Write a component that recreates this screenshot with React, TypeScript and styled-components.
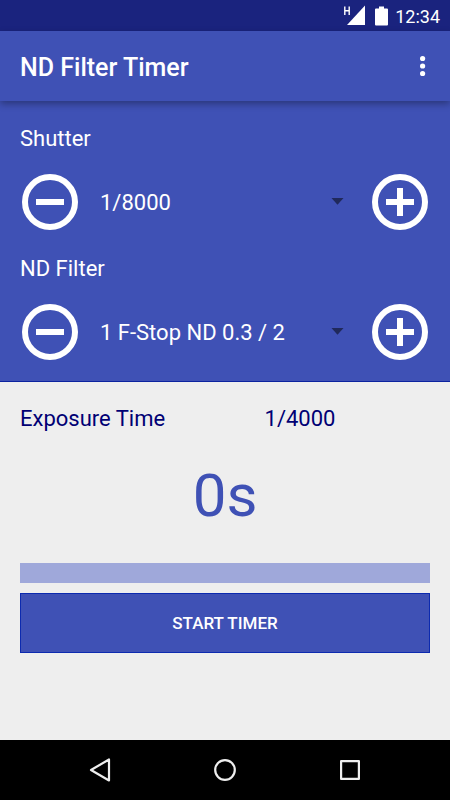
import React, { useState } from "react";
import styled, { createGlobalStyle } from "styled-components";

const GlobalStyle = createGlobalStyle`
  *, *::before, *::after { box-sizing: border-box; }
  body {
    margin: 0;
    font-family: Roboto, "Liberation Sans", sans-serif;
    font-size: 22px;
    line-height: 28px;
  }
  button, select { font: inherit; color: inherit; margin: 0; }
`;

const Screen = styled.div`
  min-height: 100vh;
  display: flex;
  flex-direction: column;
  background: #eeeeee;
`;

const StatusBar = styled.div`
  height: 31px;
  display: flex;
  align-items: center;
  justify-content: flex-end;
  gap: 7px;
  padding: 0 10px;
  background: #1a237e;
  color: #ffffff;
  font-size: 18px;
  line-height: 20px;
  svg { display: block; }
`;

const Clock = styled.time`
  padding-top: 2px;
`;

const AppBar = styled.header`
  position: relative;
  height: 70px;
  display: flex;
  align-items: center;
  justify-content: space-between;
  padding: 0 12px 0 20px;
  background: #3f51b5;
  color: #ffffff;
  box-shadow: 0 3px 7px rgba(0, 0, 0, 0.32);
`;

const Title = styled.h1`
  margin: 0;
  padding-top: 4px;
  font-size: 25px;
  font-weight: 500;
  line-height: 30px;
`;

const IconButton = styled.button<{ $width: number; $height: number }>`
  width: ${(p) => p.$width}px;
  height: ${(p) => p.$height}px;
  flex: none;
  display: flex;
  align-items: center;
  justify-content: center;
  padding: 0;
  border: 0;
  background: none;
  cursor: pointer;
`;

const Settings = styled.section`
  display: flex;
  flex-direction: column;
  gap: 23px;
  padding: 24px 20px 19px;
  background: #3f51b5;
  color: #ffffff;
  border-bottom: 1px solid #0c229f;
`;

const Field = styled.div`
  display: flex;
  flex-direction: column;
  gap: 19px;
`;

const Stepper = styled.div`
  display: flex;
  align-items: center;
  justify-content: space-between;
  height: 60px;
  gap: 20px;
`;

const Picker = styled.div`
  flex: 1;
  min-width: 0;
  display: grid;
  align-items: center;
  > * { grid-area: 1 / 1; }
  svg { justify-self: end; margin-right: 6px; pointer-events: none; }
`;

const Select = styled.select`
  width: 100%;
  height: 40px;
  padding: 2px 24px 0 0;
  border: 0;
  background: transparent;
  appearance: none;
  option { color: #1a237e; }
`;

const Results = styled.main`
  flex: 1;
  display: flex;
  flex-direction: column;
  padding: 23px 20px;
  color: #000074;
`;

const ExposureRow = styled.div`
  display: flex;
`;

const ExposureLabel = styled.span`
  flex: none;
  width: 150px;
  white-space: nowrap;
`;

const ExposureValue = styled.output`
  flex: 1;
  text-align: center;
`;

const Countdown = styled.div`
  margin: 27px 0 32px;
  text-align: center;
  color: #3f51b5;
  font-size: 60px;
  line-height: 71px;
`;

const Track = styled.div`
  height: 20px;
  background: #9fa8da;
`;

const TrackFill = styled.div`
  height: 100%;
  background: #3f51b5;
`;

const StartButton = styled.button`
  height: 60px;
  margin-top: 10px;
  padding: 0;
  border: 1px solid #0c2aaf;
  background: #3f51b5;
  color: #ffffff;
  font-size: 17px;
  font-weight: 500;
  line-height: 20px;
  text-transform: uppercase;
  cursor: pointer;
`;

const NavBar = styled.nav`
  height: 60px;
  display: flex;
  align-items: center;
  justify-content: center;
  gap: 65px;
  background: #000000;
`;

const MinusIcon = () => (
  <svg width="60" height="60" viewBox="0 0 60 60" fill="none" stroke="#fff" strokeWidth="6" aria-hidden="true">
    <circle cx="30" cy="30" r="25" />
    <path d="M16 30H44" />
  </svg>
);

const PlusIcon = () => (
  <svg width="60" height="60" viewBox="0 0 60 60" fill="none" stroke="#fff" strokeWidth="6" aria-hidden="true">
    <circle cx="30" cy="30" r="25" />
    <path d="M16 30H44M30 16V44" />
  </svg>
);

const ArrowIcon = () => (
  <svg width="13" height="8" viewBox="0 0 13 8" aria-hidden="true">
    <path d="M0.5 0H12.5L6.5 6.7Z" fill="#20295b" />
  </svg>
);

const SignalIcon = () => (
  <svg width="24" height="21" viewBox="0 0 24 21" aria-hidden="true">
    <path d="M21 0.5V20H3Z" fill="#fff" />
    <path d="M0.8 1.5V10M5.2 1.5V10M0.8 5.7H5.2" fill="none" stroke="#fff" strokeWidth="1.4" />
  </svg>
);

const BatteryIcon = () => (
  <svg width="13" height="20" viewBox="0 0 13 20" aria-hidden="true">
    <path d="M4 0.5H9V2.5H12Q13 2.5 13 3.5V18.5Q13 19.5 12 19.5H1Q0 19.5 0 18.5V3.5Q0 2.5 1 2.5H4Z" fill="#fff" />
  </svg>
);

type StepFieldProps = {
  id: string;
  label: string;
  options: string[];
  index: number;
  onChange: (index: number) => void;
};

function StepField({ id, label, options, index, onChange }: StepFieldProps) {
  return (
    <Field>
      <label htmlFor={id}>{label}</label>
      <Stepper>
        <IconButton $width={60} $height={60} aria-label={`Decrease ${label}`} onClick={() => onChange(Math.max(0, index - 1))}>
          <MinusIcon />
        </IconButton>
        <Picker>
          <Select id={id} value={index} onChange={(e) => onChange(Number(e.target.value))}>
            {options.map((option, i) => (
              <option key={option} value={i}>{option}</option>
            ))}
          </Select>
          <ArrowIcon />
        </Picker>
        <IconButton
          $width={60}
          $height={60}
          aria-label={`Increase ${label}`}
          onClick={() => onChange(Math.min(options.length - 1, index + 1))}
        >
          <PlusIcon />
        </IconButton>
      </Stepper>
    </Field>
  );
}

const speeds = [8000, 4000, 2000, 1000, 500];
const shutters = speeds.map((speed) => `1/${speed}`);
const filters = ["1 F-Stop ND 0.3 / 2", "2 F-Stop ND 0.6 / 4", "3 F-Stop ND 0.9 / 8"];

export default function App() {
  const [shutter, setShutter] = useState(0);
  const [filter, setFilter] = useState(0);
  const exposure = `1/${Math.round(speeds[shutter] / 2 ** (filter + 1))}`;
  const progress = 0;

  return (
    <>
      <GlobalStyle />
      <Screen>
        <StatusBar>
          <SignalIcon />
          <BatteryIcon />
          <Clock>12:34</Clock>
        </StatusBar>
        <AppBar>
          <Title>ND Filter Timer</Title>
          <IconButton $width={30} $height={48} aria-label="More options">
            <svg width="6" height="22" viewBox="0 0 6 22" fill="#fff" aria-hidden="true">
              <circle cx="2.6" cy="3.5" r="2.6" />
              <circle cx="2.6" cy="11" r="2.6" />
              <circle cx="2.6" cy="18.5" r="2.6" />
            </svg>
          </IconButton>
        </AppBar>
        <Settings>
          <StepField id="shutter" label="Shutter" options={shutters} index={shutter} onChange={setShutter} />
          <StepField id="filter" label="ND Filter" options={filters} index={filter} onChange={setFilter} />
        </Settings>
        <Results>
          <ExposureRow>
            <ExposureLabel>Exposure Time</ExposureLabel>
            <ExposureValue htmlFor="shutter filter">{exposure}</ExposureValue>
          </ExposureRow>
          <Countdown>0s</Countdown>
          <Track role="progressbar" aria-label="Timer progress" aria-valuenow={progress}>
            <TrackFill style={{ width: `${progress}%` }} />
          </Track>
          <StartButton>Start Timer</StartButton>
        </Results>
        <NavBar aria-label="System">
          <IconButton $width={60} $height={60} aria-label="Back">
            <svg width="26" height="26" viewBox="0 0 26 26" fill="none" stroke="#eee" strokeWidth="2.2" strokeLinejoin="round" aria-hidden="true">
              <path d="M22 2.5V23.5L4 13Z" />
            </svg>
          </IconButton>
          <IconButton $width={60} $height={60} aria-label="Home">
            <svg width="26" height="26" viewBox="0 0 26 26" fill="none" stroke="#eee" strokeWidth="2.2" aria-hidden="true">
              <circle cx="13" cy="13" r="9.8" />
            </svg>
          </IconButton>
          <IconButton $width={60} $height={60} aria-label="Recent apps">
            <svg width="26" height="26" viewBox="0 0 26 26" fill="none" stroke="#eee" strokeWidth="2.2" strokeLinejoin="round" aria-hidden="true">
              <rect x="4.1" y="4.1" width="17.8" height="17.8" />
            </svg>
          </IconButton>
        </NavBar>
      </Screen>
    </>
  );
}
